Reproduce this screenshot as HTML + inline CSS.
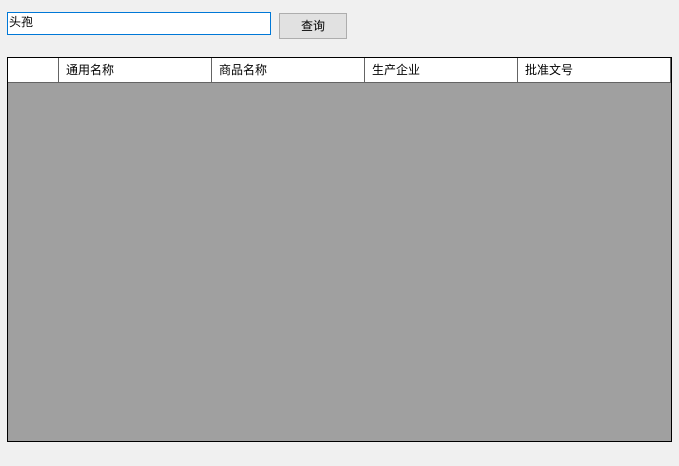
<!DOCTYPE html>
<html><head><style>
body{margin:0;width:679px;height:466px;background:#f0f0f0;position:relative;overflow:hidden;font-family:"Liberation Sans","Noto Sans CJK SC",sans-serif;font-size:12px;color:#000}
.a{position:absolute;box-sizing:border-box}
</style></head><body>
<div class="a" style="left:7px;top:12px;width:264px;height:23px;border:1px solid #0078d7;background:#fff;padding:1px 1px;line-height:17px">头孢</div>
<div class="a" style="left:279px;top:13px;width:68px;height:26px;border:1px solid #adadad;background:#e1e1e1;text-align:center;line-height:24px">查询</div>
<div class="a" style="left:7px;top:57px;width:665px;height:385px;border:1px solid #000;background:#a0a0a0"></div>
<div class="a" style="left:8px;top:58px;width:663px;height:25px;background:#fff;border-bottom:1px solid #646464"></div>
<div class="a" style="left:58px;top:58px;width:1px;height:24px;background:#646464"></div>
<div class="a" style="left:211px;top:58px;width:1px;height:24px;background:#646464"></div>
<div class="a" style="left:364px;top:58px;width:1px;height:24px;background:#646464"></div>
<div class="a" style="left:517px;top:58px;width:1px;height:24px;background:#646464"></div>
<div class="a" style="left:670px;top:58px;width:1px;height:24px;background:#646464"></div>
<div class="a" style="left:66px;top:61px">通用名称</div>
<div class="a" style="left:219px;top:61px">商品名称</div>
<div class="a" style="left:372px;top:61px">生产企业</div>
<div class="a" style="left:525px;top:61px">批准文号</div>
</body></html>
